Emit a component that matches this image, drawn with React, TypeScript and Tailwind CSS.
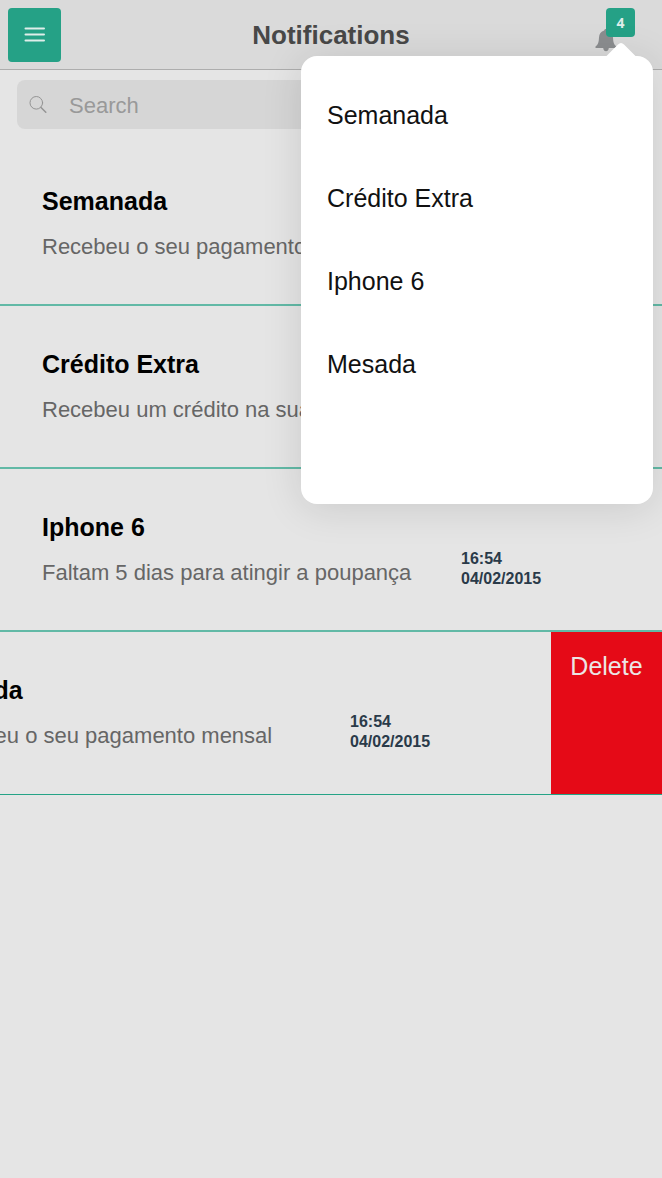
import React from "react";

type Notice = { title: string; text: string; time: string; date: string };

const notices: Notice[] = [
  { title: "Semanada", text: "Recebeu o seu pagamento semanal", time: "16:54", date: "04/02/2015" },
  { title: "Crédito Extra", text: "Recebeu um crédito na sua conta", time: "16:54", date: "04/02/2015" },
  { title: "Iphone 6", text: "Faltam 5 dias para atingir a poupança", time: "16:54", date: "04/02/2015" },
  { title: "Mesada", text: "Recebeu o seu pagamento mensal", time: "16:54", date: "04/02/2015" },
];

function MenuIcon() {
  return (
    <svg width="22" height="16" viewBox="0 0 22 16" fill="none" stroke="#dfeeea" strokeWidth="2" strokeLinecap="round" aria-hidden="true">
      <path d="M1.500 1.500h18.500M1.500 7.500h18.500M1.500 13.500h18.500" />
    </svg>
  );
}

function BellIcon() {
  return (
    <svg width="22" height="24" viewBox="0 0 22 24" fill="#8b8d8f" aria-hidden="true">
      <path d="M11 1C9.900 1 9.200 1.700 9.200 2.600C5.900 3.300 4.200 6 4 9.500C3.800 14 3.200 16.500 0.500 18.600V20.100H21.500V18.600C18.800 16.500 18.200 14 18 9.500C17.800 6 16.100 3.300 12.800 2.600C12.800 1.700 12.100 1 11 1Z" />
      <path d="M8.200 20.100H13.800C13.500 22.300 12.500 23.200 11 23.200S8.500 22.300 8.200 20.100Z" />
    </svg>
  );
}

function SearchIcon() {
  return (
    <svg width="18" height="18" viewBox="0 0 18 18" fill="none" stroke="#949494" strokeLinecap="round" aria-hidden="true">
      <circle cx="7.300" cy="6.800" r="6.300" strokeWidth="1" />
      <path d="M12 11.500l4.800 4.800" strokeWidth="1.500" />
    </svg>
  );
}

function NoticeRow({ notice, swiped }: { notice: Notice; swiped: boolean }) {
  return (
    <li className={`flex overflow-hidden ${swiped ? "border-b border-[#25a386]" : "border-b-2 border-[#62b9a6]"}`}>
      <article className={`flex w-full shrink-0 items-end pt-[42px] pl-[42px] ${swiped ? "-ml-[111px] pb-[42px]" : "pb-[41px]"}`}>
        <div className="flex min-w-0 flex-1 flex-col gap-3.5 whitespace-nowrap">
          <h2 className="text-[25px] leading-8 font-bold text-black">{notice.title}</h2>
          <p className="text-[22px] leading-8 text-[#666666]">{notice.text}</p>
        </div>
        <p className="flex w-[201px] flex-col text-base leading-5 font-bold text-[#2a3a49]">
          <time>{notice.time}</time>
          <time>{notice.date}</time>
        </p>
      </article>
      {swiped && (
        <button type="button" className="flex w-[111px] shrink-0 justify-center bg-[#e50a17] pt-[18px] text-[25px] leading-8 text-[#ece5e5]">
          Delete
        </button>
      )}
    </li>
  );
}

function Popover() {
  return (
    <div className="absolute top-14 right-[9px] z-10 w-[352px] rounded-2xl bg-white pt-[17px] pb-[99px] shadow-[0_4px_40px_rgba(0,0,0,0.12)]">
      <svg className="absolute -top-[14px] right-4" width="32" height="15" viewBox="0 0 32 15" fill="#ffffff" aria-hidden="true">
        <path d="M0 15L1.500 14L13 2.600Q16 -0.400 19 2.600L30.500 14L32 15Z" />
      </svg>
      <ul>
        {notices.map((n) => (
          <li key={n.title}>
            <a href="#" className="flex h-[83px] items-center px-[26px] text-[25px] leading-8 text-[#111111]">
              {n.title}
            </a>
          </li>
        ))}
      </ul>
    </div>
  );
}

export default function App() {
  return (
    <div className="relative min-h-screen bg-[#e5e5e5] font-['Liberation_Sans',Arial,sans-serif]">
      <header className="grid h-[70px] grid-cols-[1fr_auto_1fr] items-center border-b border-[#adadad] bg-[#dadada] pr-[27px] pl-2">
        <button type="button" aria-label="Menu" className="flex h-[54px] w-[53px] items-center justify-center rounded bg-[#25a186]">
          <MenuIcon />
        </button>
        <h1 className="pl-[19px] text-[26px] leading-8 font-bold text-[#484848]">Notifications</h1>
        <button type="button" aria-label="4 notifications" className="relative mt-2 flex h-11 w-10 items-end self-start justify-self-end">
          <BellIcon />
          <span className="absolute top-0 right-0 flex size-[29px] items-center justify-center rounded-sm bg-[#25a186] font-['Open_Sans',sans-serif] text-sm font-bold text-[#dfeeea]">
            4
          </span>
        </button>
      </header>
      <main>
        <label className="mx-[17px] mt-2.5 mb-3.5 flex h-[49px] items-center gap-[22px] rounded-lg bg-[#d6d6d6] px-3">
          <SearchIcon />
          <input
            type="search"
            aria-label="Search"
            placeholder="Search"
            className="min-w-0 flex-1 bg-transparent pt-0.5 text-[22px] text-[#666666] outline-none placeholder:text-[#999999]"
          />
        </label>
        <ul>
          {notices.map((n) => (
            <NoticeRow key={n.title} notice={n} swiped={n.title === "Mesada"} />
          ))}
        </ul>
      </main>
      <Popover />
    </div>
  );
}
